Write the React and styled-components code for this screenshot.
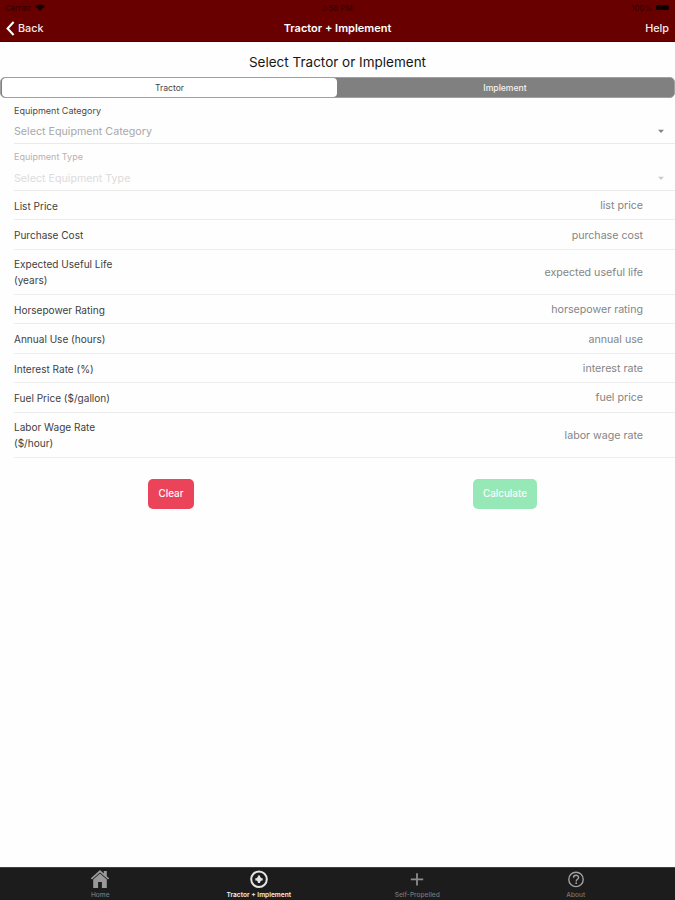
import React from "react";
import styled, {createGlobalStyle} from "styled-components";

const GlobalStyle = createGlobalStyle`
  * {
    box-sizing: border-box;
  }
  body {
    margin: 0;
    background: #ffffff;
    font-family: Inter, "Liberation Sans", sans-serif;
  }
  button {
    font-family: inherit;
    border: none;
    padding: 0;
    background: none;
  }
`;

const Screen = styled.div`
  width: 675px;
  height: 900px;
  display: flex;
  flex-direction: column;
  overflow: hidden;
  background: #fefefe;
`;

const Header = styled.header`
  height: 42px;
  flex: none;
  background: #680000;
  border-bottom: 1px solid #4c0000;
`;

const StatusBar = styled.div`
  height: 14px;
  padding: 1px 6px 0 5px;
  display: grid;
  grid-template-columns: 1fr auto 1fr;
  align-items: center;
  font-size: 7.9px;
  color: #300000;
`;

const StatusSide = styled.div`
  display: flex;
  align-items: center;
  justify-content: ${({$end}) => $end ? "flex-end" : "flex-start"};
  gap: 4px;
`;

const Battery = styled.span`
  width: 13px;
  height: 5px;
  border-radius: 1.5px;
  background: #0d0000;
`;

const NavBar = styled.div`
  height: 28px;
  padding: 0 6px;
  display: grid;
  grid-template-columns: 1fr auto 1fr;
  align-items: center;
  color: #ffffff;
`;

const NavTitle = styled.h1`
  margin: 0;
  font-size: 11px;
  font-weight: 600;
`;

const NavButton = styled.button`
  display: flex;
  align-items: center;
  gap: 3px;
  justify-self: ${({$end}) => $end ? "end" : "start"};
  color: #f5eaea;
  font-size: 10.8px;
  font-weight: 500;
`;

const Heading = styled.h2`
  margin: 0;
  height: 35px;
  padding-top: 4px;
  display: flex;
  align-items: center;
  justify-content: center;
  font-size: 13.5px;
  font-weight: 400;
  color: #161616;
`;

const Segments = styled.div`
  height: 21px;
  flex: none;
  display: grid;
  grid-template-columns: 335px 1fr;
  padding: 0 1px;
  border: 1px solid #a0a0a0;
  border-radius: 5px;
  background: #808080;
`;

const Segment = styled.button`
  border-radius: 4px;
  font-size: 8.6px;
  font-weight: ${({$active}) => $active ? 400 : 500};
  color: ${({$active}) => $active ? "#444444" : "#f2f2f2"};
  background: ${({$active}) => $active ? "#ffffff" : "transparent"};
`;

const Form = styled.main`
  padding-left: 14px;
  padding-top: 1px;
`;

const Picker = styled.div`
  height: ${({$height}) => $height}px;
  padding: ${({$disabled}) => $disabled ? 7 : 6}px 10px 0 0;
  border-bottom: 1px solid #eaeaea;
`;

const PickerLabel = styled.div`
  height: 12px;
  line-height: 12px;
  font-size: 9px;
  color: ${({$disabled}) => $disabled ? "#b3b3b3" : "#4a4a4a"};
`;

const PickerValue = styled.div`
  height: ${({$disabled}) => $disabled ? 30 : 29}px;
  display: flex;
  align-items: center;
  justify-content: space-between;
  font-size: 10.7px;
  color: ${({$disabled}) => $disabled ? "#dcdcdc" : "#a8a8a8"};
`;

const Caret = styled.svg`
  width: 8px;
  height: 5px;
  fill: ${({$disabled}) => $disabled ? "#cccccc" : "#858585"};
`;

const Field = styled.label`
  height: ${({$tall}) => $tall ? 45.3 : 29.4}px;
  padding: 1px 32px 0 0;
  display: flex;
  align-items: center;
  justify-content: space-between;
  border-bottom: 1px solid #ececec;
`;

const FieldName = styled.span`
  font-size: 10.05px;
  line-height: 16px;
  white-space: pre-line;
  color: #3e3e3e;
`;

const FieldHint = styled.span`
  font-size: 10.65px;
  color: #858585;
`;

const Actions = styled.div`
  padding: 21px 3px 0 4px;
  display: grid;
  grid-template-columns: 1fr 1fr;
  justify-items: center;
`;

const ActionButton = styled.button`
  width: ${({$width}) => $width}px;
  height: 30px;
  border-radius: 5px;
  background: ${({$color}) => $color};
  color: #fbfbfb;
  font-size: 9.8px;
  font-weight: 500;
`;

const TabBar = styled.nav`
  height: 33px;
  flex: none;
  margin-top: auto;
  padding: 0 20px 0 21px;
  display: grid;
  grid-template-columns: repeat(4, 1fr);
  background: #1c1c1c;
  border-top: 1px solid #404040;
`;

const Tab = styled.button`
  display: flex;
  flex-direction: column;
  align-items: center;
  padding-top: 1px;
  color: ${({$color}) => $color};
`;

const TabLabel = styled.span`
  margin-top: 2px;
  font-size: 6.6px;
  line-height: 8px;
  font-weight: ${({$active}) => $active ? 600 : 500};
  color: ${({$active}) => $active ? "#f0f0f0" : "#777777"};
`;

const WifiIcon = () => (
    <svg width="10" height="7" viewBox="0 0 10 7" fill="#1c0000">
        <path d="M0 2.2C3-.5 7-.5 10 2.2L5 7z"/>
    </svg>
);

const BackIcon = () => (
    <svg width="9" height="15" viewBox="0 0 9 15" fill="none" stroke="#ffffff" strokeWidth="2.1">
        <path d="M7.6 1L1.6 7.5l6 6.5"/>
    </svg>
);

const HomeIcon = () => (
    <svg width="20" height="20" viewBox="0 0 20 20" fill="currentColor">
        <path d="M10 1L.8 9.3l1.2 1.2L10 3.4l8 7.1 1.2-1.2-2.4-2.1V2h-3v2.4z"/>
        <path d="M10 4.6L3.2 10.6V19h4.9v-6h3.8v6h4.9v-8.4z"/>
    </svg>
);

const TargetIcon = () => (
    <svg width="20" height="20" viewBox="0 0 20 20" fill="none" stroke="currentColor">
        <circle cx="10" cy="10.3" r="7.8" strokeWidth="2"/>
        <path d="M10 6.6v7.4M6.3 10.3h7.4" strokeWidth="2.2"/>
        <circle cx="10" cy="10.3" r="2.5" fill="currentColor" stroke="none"/>
    </svg>
);

const PlusIcon = () => (
    <svg width="20" height="20" viewBox="0 0 20 20" fill="none" stroke="currentColor" strokeWidth="1.8">
        <path d="M10 4.2v12.4M3.8 10.4h12.4"/>
    </svg>
);

const HelpIcon = () => (
    <svg width="20" height="20" viewBox="0 0 20 20" fill="none" stroke="currentColor" strokeWidth="1.4">
        <circle cx="10" cy="10.4" r="7.2"/>
        <path d="M7.5 8.7c0-3.2 5.1-3.1 5.1-.3 0 1.9-2.4 1.9-2.4 4"/>
        <circle cx="10.2" cy="14.2" r=".9" fill="currentColor" stroke="none"/>
    </svg>
);

const fields = [
    {name: "List Price", hint: "list price"},
    {name: "Purchase Cost", hint: "purchase cost"},
    {name: "Expected Useful Life\n(years)", hint: "expected useful life", tall: true},
    {name: "Horsepower Rating", hint: "horsepower rating"},
    {name: "Annual Use (hours)", hint: "annual use"},
    {name: "Interest Rate (%)", hint: "interest rate"},
    {name: "Fuel Price ($/gallon)", hint: "fuel price"},
    {name: "Labor Wage Rate\n($/hour)", hint: "labor wage rate", tall: true},
];

const tabs = [
    {label: "Home", Icon: HomeIcon, color: "#999999"},
    {label: "Tractor + Implement", Icon: TargetIcon, color: "#e4e4e4", active: true},
    {label: "Self-Propelled", Icon: PlusIcon, color: "#8c8c8c"},
    {label: "About", Icon: HelpIcon, color: "#a0a0a0"},
];

const PickerRow = ({label, value, height, disabled}) => (
    <Picker $height={height} $disabled={disabled}>
        <PickerLabel $disabled={disabled}>{label}</PickerLabel>
        <PickerValue $disabled={disabled}>
            {value}
            <Caret viewBox="0 0 8 5" $disabled={disabled}>
                <path d="M1 .8h6L4 4z"/>
            </Caret>
        </PickerValue>
    </Picker>
);

export default function App() {
    return (
        <Screen>
            <GlobalStyle/>
            <Header>
                <StatusBar>
                    <StatusSide>Carrier <WifiIcon/></StatusSide>
                    <span>3:58 PM</span>
                    <StatusSide $end>100% <Battery/></StatusSide>
                </StatusBar>
                <NavBar>
                    <NavButton><BackIcon/>Back</NavButton>
                    <NavTitle>Tractor + Implement</NavTitle>
                    <NavButton $end>Help</NavButton>
                </NavBar>
            </Header>
            <Heading>Select Tractor or Implement</Heading>
            <Segments>
                <Segment $active>Tractor</Segment>
                <Segment>Implement</Segment>
            </Segments>
            <Form>
                <PickerRow label="Equipment Category" value="Select Equipment Category" height={45}/>
                <PickerRow label="Equipment Type" value="Select Equipment Type" height={47} disabled/>
                {fields.map(({name, hint, tall}) => (
                    <Field key={hint} $tall={tall}>
                        <FieldName>{name}</FieldName>
                        <FieldHint>{hint}</FieldHint>
                    </Field>
                ))}
            </Form>
            <Actions>
                <ActionButton $width={46} $color="#eb445a">Clear</ActionButton>
                <ActionButton $width={64} $color="#96e9b7">Calculate</ActionButton>
            </Actions>
            <TabBar>
                {tabs.map(({label, Icon, color, active}) => (
                    <Tab key={label} $color={color}>
                        <Icon/>
                        <TabLabel $active={active}>{label}</TabLabel>
                    </Tab>
                ))}
            </TabBar>
        </Screen>
    );
}
